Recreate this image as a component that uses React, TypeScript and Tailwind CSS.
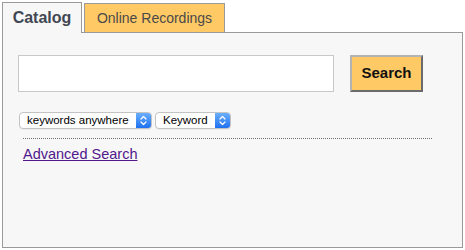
import React from "react";

function MacSelect({ label, width }: { label: string; width: number }) {
  return (
    <div
      className="flex h-[17px] items-stretch rounded-[4px] border border-[#c3c3c3] bg-white shadow-[0_1px_0_rgba(0,0,0,0.05)] overflow-hidden"
      style={{ width }}
    >
      <div className="flex flex-1 items-center pl-[7px] text-[11.5px] leading-none text-black [font-family:'Liberation_Sans',Arial,sans-serif]">
        {label}
      </div>
      <div className="flex w-[15px] items-center justify-center bg-gradient-to-b from-[#6aaefc] to-[#1c70f0]">
        <svg width="7" height="11" viewBox="0 0 7 11" fill="none">
          <path d="M1 4 L3.5 1.5 L6 4" stroke="white" strokeWidth="1.2" strokeLinecap="round" strokeLinejoin="round" />
          <path d="M1 7 L3.5 9.5 L6 7" stroke="white" strokeWidth="1.2" strokeLinecap="round" strokeLinejoin="round" />
        </svg>
      </div>
    </div>
  );
}

export default function App() {
  return (
    <div className="h-[250px] w-[465px] bg-white pl-[2px] pt-[2px] [font-family:'Liberation_Sans',Arial,sans-serif]">
      <div className="flex items-end gap-[2px]">
        <div className="relative z-10 mb-[-1px] flex h-[31px] w-[80px] items-center justify-center border border-b-0 border-[#9a9a9a] bg-[#f7f7f7] text-[16px] font-bold text-[#414753]">
          Catalog
        </div>
        <div className="flex h-[29px] w-[141px] items-center justify-center border border-b-0 border-[#9a9a9a] bg-[#ffc965] text-[14px] text-[#4a4a4a]">
          Online Recordings
        </div>
      </div>
      <div className="h-[216px] w-[461px] border border-[#9a9a9a] bg-[#f7f7f7] pl-[15px] pt-[22px]">
        <div className="flex items-center gap-[16px]">
          <input
            type="text"
            className="h-[37px] w-[316px] border border-[#c8c8c8] bg-white outline-none"
          />
          <button className="h-[37px] w-[73px] border-2 border-t-[#b3b3b3] border-l-[#b3b3b3] border-b-[#6b6b6b] border-r-[#6b6b6b] bg-[#ffc966] text-[15px] font-bold text-[#111]">
            Search
          </button>
        </div>
        <div className="mt-[20px] flex items-center gap-[3px] pl-[1px]">
          <MacSelect label="keywords anywhere" width={133} />
          <MacSelect label="Keyword" width={76} />
        </div>
        <div className="ml-[5px] mt-[9px] w-[409px] border-t border-dotted border-[#6f6f6f]" />
        <div className="ml-[5px] mt-[3px]">
          <a href="#" className="text-[14.5px] text-[#52188c] underline">
            Advanced Search
          </a>
        </div>
      </div>
    </div>
  );
}
